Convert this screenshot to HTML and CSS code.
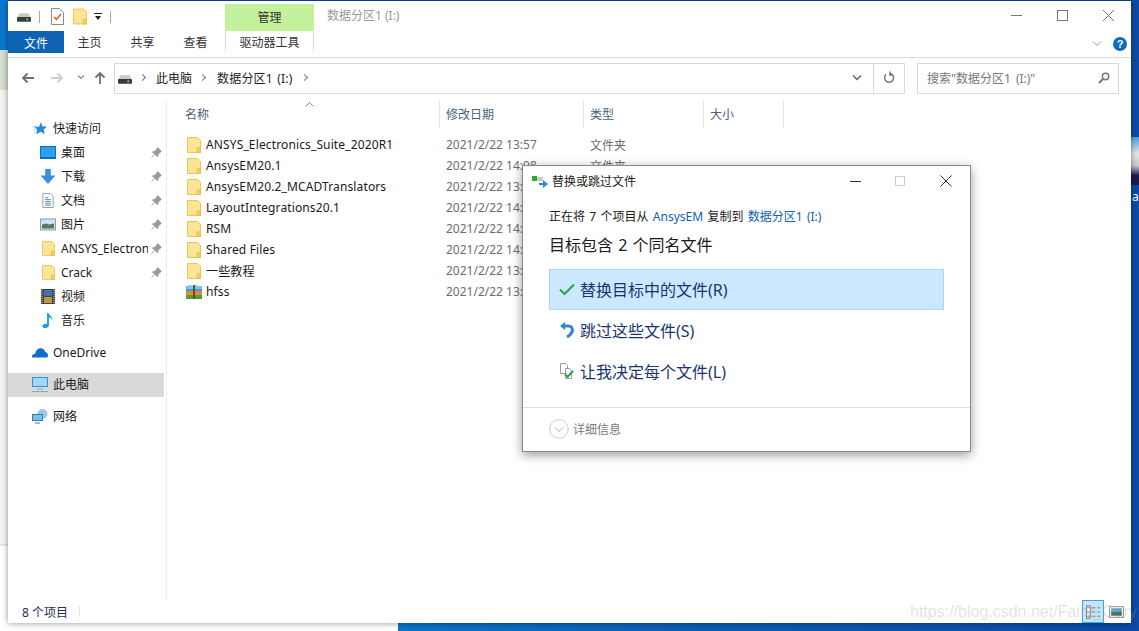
FILE: index.html
```html
<!DOCTYPE html>
<html lang="zh-CN">
<head>
    <meta charset="UTF-8">
    <title>数据分区1 (I:)</title>
    <link rel="stylesheet" href="styles.css">
</head>
<body>
    <svg class="defs" width="0" height="0">
        <symbol id="folder" viewBox="0 0 15 17">
            <path d="M.5.5h11l3 3v13H.5z" fill="#fde595" stroke="#e8c04c"/>
            <path d="M11 16.500v-5h3.500v5z" fill="#f3cd5e" stroke="#e8c04c"/>
        </symbol>
        <symbol id="drive" viewBox="0 0 15 10">
            <path d="M2.500 1h10L15 6H0z" fill="#c9c9c9"/>
            <rect y="5" width="15" height="5" rx="1" fill="#3b3b3b"/>
            <rect x="10" y="6.500" width="2" height="2" fill="#4be04b"/>
        </symbol>
        <symbol id="pin" viewBox="0 0 12 12">
            <path d="M7 .5l4.500 4.500-1.500.5-2.500 3-.5 2L1.500 5.500l2-.5 3-2.500zM3.500 8.500L.5 11.500" fill="#9a9a9a" stroke="#9a9a9a"/>
        </symbol>
    </svg>

    <div class="desk-left-top"></div>
    <div class="desk-left-mid"></div>
    <div class="desk-left-low"></div>
    <div class="desk-right-icon"></div>
    <div class="desk-right-label">a</div>
    <div class="desk-bottom"></div>

    <div class="window">
        <div class="titlebar">
            <div class="quick-bar">
                <svg class="qa-drive"><use href="#drive"/></svg>
                <span class="qa-sep"></span>
                <svg class="qa-doc" viewBox="0 0 13 17">
                    <path d="M.5.5h8l4 4v12H.500z" fill="#fff" stroke="#8a8a8a"/>
                    <path d="M3 9l2.500 2.500L10 6" fill="none" stroke="#e0562a" stroke-width="1.500"/>
                </svg>
                <svg class="qa-folder"><use href="#folder"/></svg>
                <svg class="qa-arrow" viewBox="0 0 8 7">
                    <path d="M0 0h8v1H0zM1 3h6L4 7z" fill="#222"/>
                </svg>
                <span class="qa-sep qa-sep-last"></span>
            </div>
            <div class="manage-tab">管理</div>
            <div class="title-text">数据分区1 (I:)</div>
            <div class="win-controls">
                <svg viewBox="0 0 45 20"><path d="M17 9.500h11" stroke="#777" fill="none"/></svg>
                <svg viewBox="0 0 45 20"><rect x="17.500" y="4.500" width="10" height="10" fill="none" stroke="#777"/></svg>
                <svg viewBox="0 0 45 20"><path d="M17 4l11 11M28 4L17 15" stroke="#777" fill="none"/></svg>
            </div>
        </div>

        <div class="ribbon">
            <div class="tab tab-file">文件</div>
            <div class="tab tab-home">主页</div>
            <div class="tab">共享</div>
            <div class="tab">查看</div>
            <div class="tab tab-tools">驱动器工具</div>
            <div class="ribbon-right">
                <svg class="ribbon-chevron" viewBox="0 0 10 6"><path d="M1 .5l4 4 4-4" fill="none" stroke="#999"/></svg>
                <div class="help">?</div>
            </div>
        </div>

        <div class="address-row">
            <div class="nav">
                <svg class="nav-back" viewBox="0 0 13 12"><path d="M13 6H2M6.500 1.500L2 6l4.500 4.500" fill="none" stroke="#707070" stroke-width="1.800"/></svg>
                <svg class="nav-forward" viewBox="0 0 13 12"><path d="M0 6h11M6.500 1.500L11 6l-4.500 4.500" fill="none" stroke="#cfcfcf" stroke-width="1.800"/></svg>
                <svg class="nav-down" viewBox="0 0 8 5"><path d="M1 .5l3 3 3-3" fill="none" stroke="#888" stroke-width="1.200"/></svg>
                <svg class="nav-up" viewBox="0 0 12 13"><path d="M6 13V2M1.500 6.500L6 2l4.500 4.500" fill="none" stroke="#707070" stroke-width="1.800"/></svg>
            </div>
            <div class="address-box">
                <svg class="addr-drive"><use href="#drive"/></svg>
                <span class="crumb-arrow"></span>
                <span class="crumb crumb-pc">此电脑</span>
                <span class="crumb-arrow"></span>
                <span class="crumb crumb-drive">数据分区1 (I:)</span>
                <span class="crumb-arrow crumb-arrow-last"></span>
                <svg class="addr-chevron" viewBox="0 0 10 6"><path d="M1 .5l4 4 4-4" fill="none" stroke="#666" stroke-width="1.500"/></svg>
                <div class="addr-refresh">
                    <svg viewBox="0 0 12 13"><path d="M7.500 2.500A4.500 4.500 0 1 1 3 3.500M7 .5v3.500h3.500" fill="none" stroke="#777" stroke-width="1.500"/></svg>
                </div>
            </div>
            <div class="search-box">
                <span class="search-text">搜索"数据分区1 (I:)"</span>
                <svg class="search-icon" viewBox="0 0 12 12"><circle cx="7.500" cy="4.500" r="3.200" fill="none" stroke="#777" stroke-width="1.500"/><path d="M5 7l-4 4" stroke="#777" stroke-width="2"/></svg>
            </div>
        </div>

        <div class="main">
            <div class="sidebar">
                <div class="side-row">
                    <svg class="side-icon" viewBox="0 0 16 16"><path d="M9 1l1.500 4.500 5 .5-3.500 3 1 5-4-2.500L4 14l1-5-3-3h5z" fill="#2b88d8"/><path d="M0 6h4M1 9h3M2 12h2" stroke="#8cc4ee"/></svg>
                    <span>快速访问</span>
                </div>
                <div class="side-row sub">
                    <svg class="side-icon" viewBox="0 0 16 13"><rect width="16" height="13" fill="#0f6cbd"/><rect x="1" y="1" width="14" height="10" fill="#2da0f0"/></svg>
                    <span class="side-label">桌面</span>
                    <svg class="side-pin"><use href="#pin"/></svg>
                </div>
                <div class="side-row sub">
                    <svg class="side-icon" viewBox="0 0 16 16"><path d="M5 0h6v7h5l-8 9-8-9h5z" fill="#3a8fde"/></svg>
                    <span class="side-label">下载</span>
                    <svg class="side-pin"><use href="#pin"/></svg>
                </div>
                <div class="side-row sub">
                    <svg class="side-icon" viewBox="0 0 16 16"><path d="M2.500.5h8l3 3v12h-11z" fill="#fff" stroke="#999"/><path d="M5 5h3M5 7h6M5 9h6M5 11h6M5 13h6" stroke="#3c8dc8"/></svg>
                    <span class="side-label">文档</span>
                    <svg class="side-pin"><use href="#pin"/></svg>
                </div>
                <div class="side-row sub">
                    <svg class="side-icon" viewBox="0 0 16 12"><rect x=".5" y=".5" width="15" height="11" fill="#cfe3f3" stroke="#999"/><path d="M2 6l4-1 3 1 5-1v5H2z" fill="#4d7a6a"/></svg>
                    <span class="side-label">图片</span>
                    <svg class="side-pin"><use href="#pin"/></svg>
                </div>
                <div class="side-row sub">
                    <svg class="side-icon side-folder"><use href="#folder"/></svg>
                    <span class="side-label">ANSYS_Electronics_Suite</span>
                    <svg class="side-pin"><use href="#pin"/></svg>
                </div>
                <div class="side-row sub">
                    <svg class="side-icon side-folder"><use href="#folder"/></svg>
                    <span class="side-label">Crack</span>
                    <svg class="side-pin"><use href="#pin"/></svg>
                </div>
                <div class="side-row sub">
                    <svg class="side-icon" viewBox="0 0 14 15"><rect width="14" height="15" fill="#444"/><rect x="3" y="1" width="8" height="6" fill="#3f6fb5"/><rect x="3" y="8" width="8" height="6" fill="#b59a3f"/><path d="M1 1v13M13 1v13" stroke="#ddd" stroke-dasharray="1 1"/></svg>
                    <span class="side-label">视频</span>
                </div>
                <div class="side-row sub">
                    <svg class="side-icon" viewBox="0 0 14 16"><path d="M6 0h1.500c.5 3 5 3.500 4 8-.5-2-2-3-3.500-3.500V13c0 2-2 3-4 3s-3-1-3-2 1.500-3 5-2.500z" fill="#1e9be8"/></svg>
                    <span class="side-label">音乐</span>
                </div>
                <div class="side-row group">
                    <svg class="side-icon" viewBox="0 0 16 10"><path d="M0 10c-.2-2.500 1-3.500 3-3.500C4 2 7 0 10 1c2 .6 3 2 3.200 3.500 1.800.3 2.800 2 2.800 3.500 0 1-.5 2-1 2z" fill="#0f6cd0"/></svg>
                    <span>OneDrive</span>
                </div>
                <div class="side-row group selected">
                    <svg class="side-icon" viewBox="0 0 16 15"><rect width="16" height="10" fill="#3a8fd0"/><rect x="1" y="1" width="14" height="8" fill="#9fd6f8"/><path d="M5 12h6M0 14.500h16" stroke="#88a8c4"/></svg>
                    <span>此电脑</span>
                </div>
                <div class="side-row group">
                    <svg class="side-icon" viewBox="0 0 16 15"><circle cx="10.500" cy="5" r="5" fill="#9dc8e8"/><rect y="5" width="11" height="7" fill="#2f7fb8"/><rect x="1" y="6" width="9" height="5" fill="#7cc0ea"/><path d="M3 14h5" stroke="#668"/></svg>
                    <span>网络</span>
                </div>
            </div>

            <div class="files">
                <div class="file-header">
                    <svg class="sort-caret" viewBox="0 0 9 5"><path d="M.5 4.500l4-4 4 4" fill="none" stroke="#888"/></svg>
                    <div class="col col-name">名称</div>
                    <div class="col col-date">修改日期</div>
                    <div class="col col-type">类型</div>
                    <div class="col col-size">大小</div>
                </div>
                <div class="file-rows">
                    <div class="file-row"><svg class="file-icon"><use href="#folder"/></svg><span class="file-name">ANSYS_Electronics_Suite_2020R1</span><span class="file-date">2021/2/22 13:57</span><span class="file-type">文件夹</span></div>
                    <div class="file-row"><svg class="file-icon"><use href="#folder"/></svg><span class="file-name">AnsysEM20.1</span><span class="file-date">2021/2/22 14:08</span><span class="file-type">文件夹</span></div>
                    <div class="file-row"><svg class="file-icon"><use href="#folder"/></svg><span class="file-name">AnsysEM20.2_MCADTranslators</span><span class="file-date">2021/2/22 13:57</span><span class="file-type">文件夹</span></div>
                    <div class="file-row"><svg class="file-icon"><use href="#folder"/></svg><span class="file-name">LayoutIntegrations20.1</span><span class="file-date">2021/2/22 14:08</span><span class="file-type">文件夹</span></div>
                    <div class="file-row"><svg class="file-icon"><use href="#folder"/></svg><span class="file-name">RSM</span><span class="file-date">2021/2/22 14:08</span><span class="file-type">文件夹</span></div>
                    <div class="file-row"><svg class="file-icon"><use href="#folder"/></svg><span class="file-name">Shared Files</span><span class="file-date">2021/2/22 14:08</span><span class="file-type">文件夹</span></div>
                    <div class="file-row"><svg class="file-icon"><use href="#folder"/></svg><span class="file-name">一些教程</span><span class="file-date">2021/2/22 13:57</span><span class="file-type">文件夹</span></div>
                    <div class="file-row">
                        <svg class="file-icon file-icon-rar" viewBox="0 0 16 14">
                            <rect y="1" width="16" height="5" fill="#3f9be0"/>
                            <path d="M1 1l3-1 3 1 3-1 3 1 3 0v3H0z" fill="#7cc4f0"/>
                            <rect y="6" width="16" height="4" fill="#e58a2a"/>
                            <rect y="10" width="16" height="4" fill="#4f9e3a"/>
                            <rect x="7" width="2" height="14" fill="#6b4a2a"/>
                        </svg>
                        <span class="file-name">hfss</span><span class="file-date">2021/2/22 13:57</span>
                    </div>
                </div>
            </div>
        </div>

        <div class="statusbar">
            <span class="status-count">8 个项目</span>
            <span class="status-sep"></span>
            <div class="view-buttons">
                <div class="view-btn view-btn-on">
                    <svg viewBox="0 0 16 14"><rect x=".5" y=".5" width="4" height="13" fill="#fff" stroke="#777"/><path d="M1.500 2.500h2M1.500 7h2M1.500 11.500h2" stroke="#555"/><path d="M6 2.500h4M12 2.500h3M6 7h4M12 7h3M6 11.500h4M12 11.500h3" stroke="#777"/></svg>
                </div>
                <div class="view-btn">
                    <svg viewBox="0 0 14 11"><rect x=".5" y=".5" width="13" height="10" fill="#fff" stroke="#999"/><rect x="2" y="2" width="10" height="3" fill="#5aa7e0"/><rect x="2" y="5" width="10" height="4" fill="#3f7060"/></svg>
                </div>
            </div>
        </div>
    </div>

    <div class="dialog">
        <div class="dialog-title">
            <svg class="dialog-icon" viewBox="0 0 16 13">
                <rect y="1" width="5" height="5" fill="#35a935"/>
                <rect x="5" y="2" width="6" height="4" fill="#ccc"/>
                <path d="M7 8h4V5l5 4-5 4v-3H7z" fill="#2b88d8"/>
            </svg>
            <span class="dialog-title-text">替换或跳过文件</span>
            <div class="dialog-controls">
                <svg viewBox="0 0 12 12"><path d="M0 6.500h11" stroke="#333" fill="none"/></svg>
                <svg viewBox="0 0 12 12"><rect x=".5" y="1.500" width="9" height="9" fill="none" stroke="#ccc"/></svg>
                <svg viewBox="0 0 12 12"><path d="M.5.500l11 11M11.500.500l-11 11" stroke="#333" fill="none"/></svg>
            </div>
        </div>
        <div class="dialog-body">
            <div class="copy-line">正在将 7 个项目从 <a class="copy-link">AnsysEM</a> 复制到 <a class="copy-link">数据分区1 (I:)</a></div>
            <div class="conflict-line">目标包含 2 个同名文件</div>
            <div class="option option-active">
                <svg class="option-icon" viewBox="0 0 16 13"><path d="M1 7l4.500 4.500L15 2" fill="none" stroke="#2aa84a" stroke-width="2.200"/></svg>
                <span>替换目标中的文件(R)</span>
            </div>
            <div class="option">
                <svg class="option-icon" viewBox="0 0 16 16"><path d="M1 4l5-4v8z" fill="#2b88d8"/><path d="M5 4h4c4 0 5 3 4 6-1 2-3 4-5 5" fill="none" stroke="#2b88d8" stroke-width="3"/></svg>
                <span>跳过这些文件(S)</span>
            </div>
            <div class="option">
                <svg class="option-icon" viewBox="0 0 16 16"><path d="M1.500.5h5l2 2v8h-7z" fill="#fff" stroke="#999"/><path d="M6.500 5.500h4l2 2v8h-6z" fill="#fff" stroke="#999"/><path d="M6 11l2.500 3L14 8" fill="none" stroke="#2aa84a" stroke-width="2"/></svg>
                <span>让我决定每个文件(L)</span>
            </div>
        </div>
        <div class="dialog-footer">
            <svg class="more-icon" viewBox="0 0 20 20"><circle cx="10" cy="10" r="9.300" fill="none" stroke="#ccc"/><path d="M6 8.500l4 4 4-4" fill="none" stroke="#aaa"/></svg>
            <span>详细信息</span>
        </div>
    </div>

    <div class="watermark">https://blog.csdn.net/Fairy_Gary</div>
</body>
</html>
```

FILE: styles.css
```css
* {
    box-sizing: border-box;
}
html, body {
    margin: 0;
    height: 100%;
}
body {
    position: relative;
    width: 1139px;
    height: 631px;
    overflow: hidden;
    background: #0b4aa6;
    font-family: "Noto Sans", "Noto Sans CJK SC", sans-serif;
    font-size: 12px;
    color: #1a1a1a;
}
.defs {
    position: absolute;
}

/* desktop behind the window */
.desk-left-top {
    position: absolute;
    left: 0;
    top: 0;
    width: 8px;
    height: 50px;
    background: #0a78d0;
}
.desk-left-mid {
    position: absolute;
    left: 0;
    top: 50px;
    width: 8px;
    height: 40px;
    background: #d7ded2;
}
.desk-left-low {
    position: absolute;
    left: 0;
    top: 90px;
    width: 8px;
    height: 541px;
    background: linear-gradient(#f4f4f4 0, #f4f4f4 454px, #d0d0d0 455px, #fff 456px);
}
.desk-bottom {
    position: absolute;
    left: 0;
    top: 623px;
    width: 1139px;
    height: 8px;
    background: linear-gradient(90deg, #fff 0, #fff 398px, #0a74c6 398px, #0b5cb4 700px, #0b4aa6 1139px);
}
.desk-right-icon {
    position: absolute;
    left: 1131px;
    top: 137px;
    width: 8px;
    height: 48px;
    background: linear-gradient(#4b9be0 0, #e8e8e8 35%, #c8c8d0 60%, #1c1a50 80%);
}
.desk-right-label {
    position: absolute;
    left: 1132px;
    top: 189px;
    color: #fff;
    font-size: 12px;
    line-height: 16px;
}

.window {
    position: absolute;
    left: 8px;
    top: 1px;
    width: 1123px;
    height: 622px;
    background: #fff;
    display: flex;
    flex-direction: column;
    box-shadow: 0 0 6px rgba(0, 0, 0, 0.45);
}

/* title bar */
.titlebar {
    height: 30px;
    position: relative;
    display: flex;
    flex: none;
}
.quick-bar {
    width: 217px;
    display: flex;
    align-items: center;
    padding-left: 9px;
    padding-top: 1px;
}
.qa-drive {
    width: 14px;
    height: 10px;
}
.qa-sep {
    width: 1px;
    height: 12px;
    background: #a8a8a8;
    margin-left: 8px;
}
.qa-doc {
    width: 13px;
    height: 17px;
    margin-left: 11px;
}
.qa-folder {
    width: 14px;
    height: 17px;
    margin-left: 9px;
}
.qa-arrow {
    width: 8px;
    height: 7px;
    margin-left: 7px;
}
.qa-sep-last {
    margin-left: 8px;
}
.manage-tab {
    width: 89px;
    margin-top: 3px;
    background: #c3f19c;
    text-align: center;
    line-height: 27px;
    color: #333;
}
.title-text {
    margin-left: 13px;
    line-height: 30px;
    color: #999;
}
.win-controls {
    margin-left: auto;
    display: flex;
    padding-top: 5px;
}
.win-controls svg {
    width: 45px;
    height: 20px;
    margin-left: 1px;
}

/* ribbon tabs */
.ribbon {
    height: 27px;
    flex: none;
    display: flex;
    align-items: flex-start;
    border-bottom: 1px solid #dadada;
}
.tab {
    width: 53px;
    height: 22px;
    line-height: 23px;
    text-align: center;
    color: #333;
}
.tab-file {
    width: 56px;
    background: #0f63b4;
    color: #fff;
    line-height: 25px;
}
.tab-home {
    margin-left: -1px;
}
.tab-tools {
    width: 89px;
    margin-left: 3px;
    height: 20px;
    border-left: 1px solid #dadada;
    border-right: 1px solid #dadada;
}
.ribbon-right {
    margin-left: auto;
    display: flex;
    align-items: center;
    height: 26px;
    padding-right: 4px;
}
.ribbon-chevron {
    width: 10px;
    height: 6px;
}
.help {
    width: 14px;
    height: 14px;
    margin-left: 11px;
    border-radius: 50%;
    background: #0f6cc4;
    color: #fff;
    font-family: "Liberation Sans", sans-serif;
    font-weight: bold;
    font-size: 11px;
    line-height: 14px;
    text-align: center;
}

/* address row */
.address-row {
    height: 42px;
    flex: none;
    display: flex;
    padding-top: 5px;
    padding-left: 13px;
}
.nav {
    width: 93px;
    height: 29px;
    display: flex;
    align-items: center;
}
.nav-back, .nav-forward {
    width: 13px;
    height: 12px;
}
.nav-forward {
    margin-left: 17px;
}
.nav-down {
    width: 8px;
    height: 5px;
    margin-left: 13px;
}
.nav-up {
    width: 12px;
    height: 13px;
    margin-left: 9px;
}
.address-box {
    width: 791px;
    height: 31px;
    border: 1px solid #d9d9d9;
    display: flex;
    align-items: center;
    padding-left: 3px;
    padding-bottom: 2px;
}
.addr-drive {
    width: 14px;
    height: 10px;
    margin-top: 3px;
}
.crumb-arrow {
    width: 5px;
    height: 5px;
    margin-left: 8px;
    border-top: 1px solid #777;
    border-right: 1px solid #777;
    transform: rotate(45deg);
}
.crumb-arrow-last {
    margin-left: 10px;
}
.crumb {
    color: #222;
    margin-left: 11px;
}
.crumb-drive {
    margin-left: 12px;
    word-spacing: 1px;
    letter-spacing: .2px;
}
.addr-chevron {
    width: 10px;
    height: 6px;
    margin-left: auto;
}
.addr-refresh {
    width: 31px;
    height: 29px;
    margin-left: 11px;
    align-self: flex-start;
    padding-bottom: 2px;
    border-left: 1px solid #d9d9d9;
    display: flex;
    align-items: center;
    justify-content: center;
}
.addr-refresh svg {
    width: 12px;
    height: 13px;
}
.search-box {
    width: 202px;
    height: 31px;
    margin-left: 12px;
    border: 1px solid #d9d9d9;
    display: flex;
    align-items: center;
    padding: 0 8px 2px 9px;
    color: #777;
    word-spacing: 2px;
}
.search-icon {
    width: 12px;
    height: 12px;
    margin-left: auto;
}

/* main area */
.main {
    flex: 1;
    display: flex;
    min-height: 0;
}
.sidebar {
    width: 159px;
    flex: none;
    padding-top: 17px;
    border-right: 1px solid #eee;
}
.side-row {
    height: 24px;
    display: flex;
    align-items: center;
    padding-left: 24px;
    padding-bottom: 2px;
    color: #1a1a1a;
}
.side-row.sub {
    padding-left: 32px;
}
.side-row.group {
    margin-top: 8px;
}
.side-row.selected {
    background: #d9d9d9;
    width: 156px;
}
.side-icon {
    width: 16px;
    height: 15px;
    margin-right: 5px;
    flex: none;
}
.side-folder {
    width: 13px;
    height: 17px;
    margin-left: 2px;
    margin-right: 6px;
}
.side-label {
    width: 87px;
    overflow: hidden;
    white-space: nowrap;
}
.side-pin {
    width: 11px;
    height: 11px;
    margin-left: 3px;
}
.files {
    flex: 1;
    position: relative;
}
.file-header {
    height: 28px;
    display: flex;
    color: #4c607a;
    margin-bottom: 6px;
}
.sort-caret {
    position: absolute;
    left: 138px;
    top: 2px;
    width: 9px;
    height: 5px;
}
.col {
    border-right: 1px solid #e5e5e5;
    line-height: 30px;
    padding-left: 6px;
}
.col-name {
    width: 273px;
    padding-left: 18px;
}
.col-date {
    width: 144px;
}
.col-type {
    width: 120px;
}
.col-size {
    width: 80px;
}
.file-row {
    height: 21px;
    display: flex;
    align-items: center;
}
.file-icon {
    width: 14px;
    height: 16px;
    margin-left: 20px;
    flex: none;
}
.file-icon-rar {
    width: 16px;
    height: 14px;
    margin-left: 19px;
    margin-right: -1px;
}
.file-name {
    width: 240px;
    margin-left: 5px;
    flex: none;
    color: #1a1a1a;
    white-space: nowrap;
    letter-spacing: .13px;
}
.file-date {
    width: 144px;
    flex: none;
    color: #6d6d6d;
}
.file-type {
    color: #6d6d6d;
}

/* status bar */
.statusbar {
    height: 23px;
    flex: none;
    display: flex;
    align-items: center;
    padding-left: 14px;
    color: #1f2f55;
}
.status-count {
    width: 57px;
}
.status-sep {
    width: 1px;
    height: 11px;
    background: #e5e5e5;
}
.view-buttons {
    margin-left: auto;
    display: flex;
    margin-right: 4px;
    align-self: flex-end;
}
.view-btn {
    width: 22px;
    height: 23px;
    display: flex;
    align-items: center;
    justify-content: center;
    margin-left: 1px;
}
.view-btn svg {
    width: 15px;
    height: 14px;
}
.view-btn-on {
    background: #c5e4f5;
    border: 1px solid #3aa8e0;
}

/* replace or skip dialog */
.dialog {
    position: absolute;
    left: 522px;
    top: 165px;
    width: 449px;
    height: 287px;
    background: #fff;
    border: 1px solid #8a8a8a;
    box-shadow: 0 3px 10px rgba(0, 0, 0, 0.4);
    display: flex;
    flex-direction: column;
}
.dialog-title {
    height: 29px;
    flex: none;
    display: flex;
    align-items: center;
    padding-left: 9px;
    padding-top: 1px;
    color: #1a1a1a;
}
.dialog-icon {
    width: 16px;
    height: 13px;
    margin-right: 4px;
}
.dialog-controls {
    margin-left: auto;
    display: flex;
    padding-right: 18px;
}
.dialog-controls svg {
    width: 12px;
    height: 12px;
    margin-left: 33px;
}
.dialog-body {
    flex: 1;
    padding: 14px 26px 0;
}
.copy-line {
    height: 16px;
    line-height: 16px;
    color: #1a1a1a;
    word-spacing: 1.2px;
}
.copy-link {
    color: #0d5fb8;
}
.conflict-line {
    margin-top: 8px;
    font-size: 16px;
    line-height: 24px;
    color: #1a1a1a;
    word-spacing: 1px;
}
.option {
    height: 41px;
    width: 395px;
    display: flex;
    align-items: center;
    padding-left: 9px;
    padding-bottom: 2px;
    font-size: 16px;
    color: #1a3470;
    border: 1px solid transparent;
}
.option-active {
    margin-top: 12px;
    background: #cce8ff;
    border-color: #a8d8f8;
}
.option-icon {
    width: 16px;
    height: 16px;
    margin-right: 5px;
    flex: none;
}
.dialog-footer {
    height: 44px;
    flex: none;
    border-top: 1px solid #dfdfdf;
    display: flex;
    align-items: center;
    padding-left: 26px;
    padding-bottom: 2px;
    color: #7a7a7a;
}
.more-icon {
    width: 20px;
    height: 20px;
    margin-right: 4px;
}

.watermark {
    position: absolute;
    left: 910px;
    top: 601px;
    font-family: "Liberation Sans", sans-serif;
    font-size: 16px;
    line-height: 22px;
    color: rgba(150, 150, 150, 0.28);
    white-space: nowrap;
}
```
